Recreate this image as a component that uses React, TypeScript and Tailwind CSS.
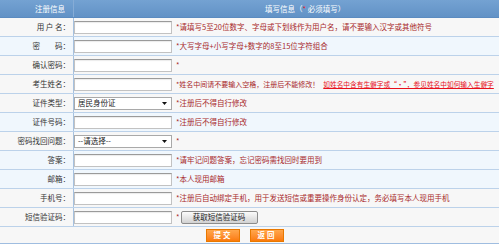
import React from 'react';

const FONT = { fontFamily: '"Noto Sans CJK SC", "Noto Sans", "Liberation Sans", sans-serif' };

type Row = {
  label: string;
  kind: 'input' | 'select';
  value?: string;
  hint?: string;
  link?: string;
  blue?: boolean;
  sms?: boolean;
};

const ROWS: Row[] = [
  { label: '用 户 名：', kind: 'input', hint: '*请填写5至20位数字、字母或下划线作为用户名，请不要输入汉字或其他符号' },
  { label: '密　　码：', kind: 'input', hint: '*大写字母+小写字母+数字的8至15位字符组合', blue: true },
  { label: '确认密码：', kind: 'input', hint: '*' },
  {
    label: '考生姓名：',
    kind: 'input',
    hint: '*姓名中间请不要输入空格，注册后不能修改！',
    link: '如姓名中含有生僻字或“·”，参见姓名中如何输入生僻字',
  },
  { label: '证件类型：', kind: 'select', value: '居民身份证', hint: '*注册后不得自行修改' },
  { label: '证件号码：', kind: 'input', hint: '*注册后不得自行修改', blue: true },
  { label: '密码找回问题：', kind: 'select', value: '--请选择--', hint: '*' },
  { label: '答案：', kind: 'input', hint: '*请牢记问题答案，忘记密码需找回时要用到', blue: true },
  { label: '邮箱：', kind: 'input', hint: '*本人现用邮箱', blue: true },
  { label: '手机号：', kind: 'input', hint: '*注册后自动绑定手机，用于发送短信或重要操作身份认定，务必填写本人现用手机' },
  { label: '短信验证码：', kind: 'input', hint: '*', sms: true },
];

const Field = ({ row }: { row: Row }) => {
  if (row.kind === 'select') {
    return (
      <div className="flex h-[13px] w-[98px] items-center justify-between border border-[#a9a9a9] bg-white pl-[3px] pr-[4px] text-[7.5px] leading-none text-[#222]">
        <span>{row.value}</span>
        <svg width="5" height="3" viewBox="0 0 5 3">
          <path d="M0 0 L5 0 L2.5 3 Z" fill="#111" />
        </svg>
      </div>
    );
  }
  return (
    <div className="h-[13px] w-[98px] border border-[#c2c2c2] border-t-[#9a9a9a] bg-white shadow-[inset_0_1px_1px_rgba(0,0,0,0.08)]" />
  );
};

export default function App() {
  return (
    <div className="w-[499px] h-[244px] overflow-hidden bg-[#f7f7f7] text-[#333]" style={FONT}>
      {/* header */}
      <div className="flex h-[18px] items-center bg-gradient-to-b from-[#74a2d2] to-[#6292c6] border-b border-[#5b8bc0] text-[7.5px] leading-none text-white">
        <div className="flex h-full w-[74px] items-center border-r border-[#86acd6] pl-[35px]">注册信息</div>
        <div className="pl-[191px]">
          填写信息（<span className="text-[#e0202a]">*</span> 必须填写）
        </div>
      </div>

      {ROWS.map((row) => (
        <div
          key={row.label}
          className={`flex h-[19px] border-b border-[#bcd2ea] ${row.blue ? 'bg-[#f0f7fd]' : 'bg-[#f7f7f7]'}`}
        >
          <div className="flex w-[74px] shrink-0 items-center justify-end border-r border-[#a6c1df] pr-[3px] text-[7.5px] leading-none text-[#333] whitespace-nowrap">
            {row.label}
          </div>
          <div className="flex items-center whitespace-nowrap">
            <Field row={row} />
            <span className={`ml-[4px] leading-none text-[#a8282a] ${row.link ? 'text-[7px]' : 'text-[7.5px]'}`}>
              {row.hint}
            </span>
            {row.link && (
              <span className="ml-[4px] text-[6.7px] leading-none text-[#e8101c] underline">{row.link}</span>
            )}
            {row.sms && (
              <button className="ml-[1px] h-[13px] w-[77px] rounded-[2px] border border-[#8c8c8c] bg-gradient-to-b from-[#fbfbfb] to-[#d2d2d2] text-[7.5px] leading-none text-[#222]">
                获取短信验证码
              </button>
            )}
          </div>
        </div>
      ))}

      {/* actions */}
      <div className="flex h-[17px] items-center border-b border-[#9fbde0] bg-[#f7f7f7] pl-[206px] gap-[10px]">
        <button className="h-[13px] w-[34px] border border-[#e87800] bg-gradient-to-b from-[#ffa64a] to-[#fb7a05] text-[7.5px] font-bold leading-none tracking-[2px] text-white">
          提交
        </button>
        <button className="h-[13px] w-[34px] border border-[#e87800] bg-gradient-to-b from-[#ffa64a] to-[#fb7a05] text-[7.5px] font-bold leading-none tracking-[2px] text-white">
          返回
        </button>
      </div>
    </div>
  );
}
